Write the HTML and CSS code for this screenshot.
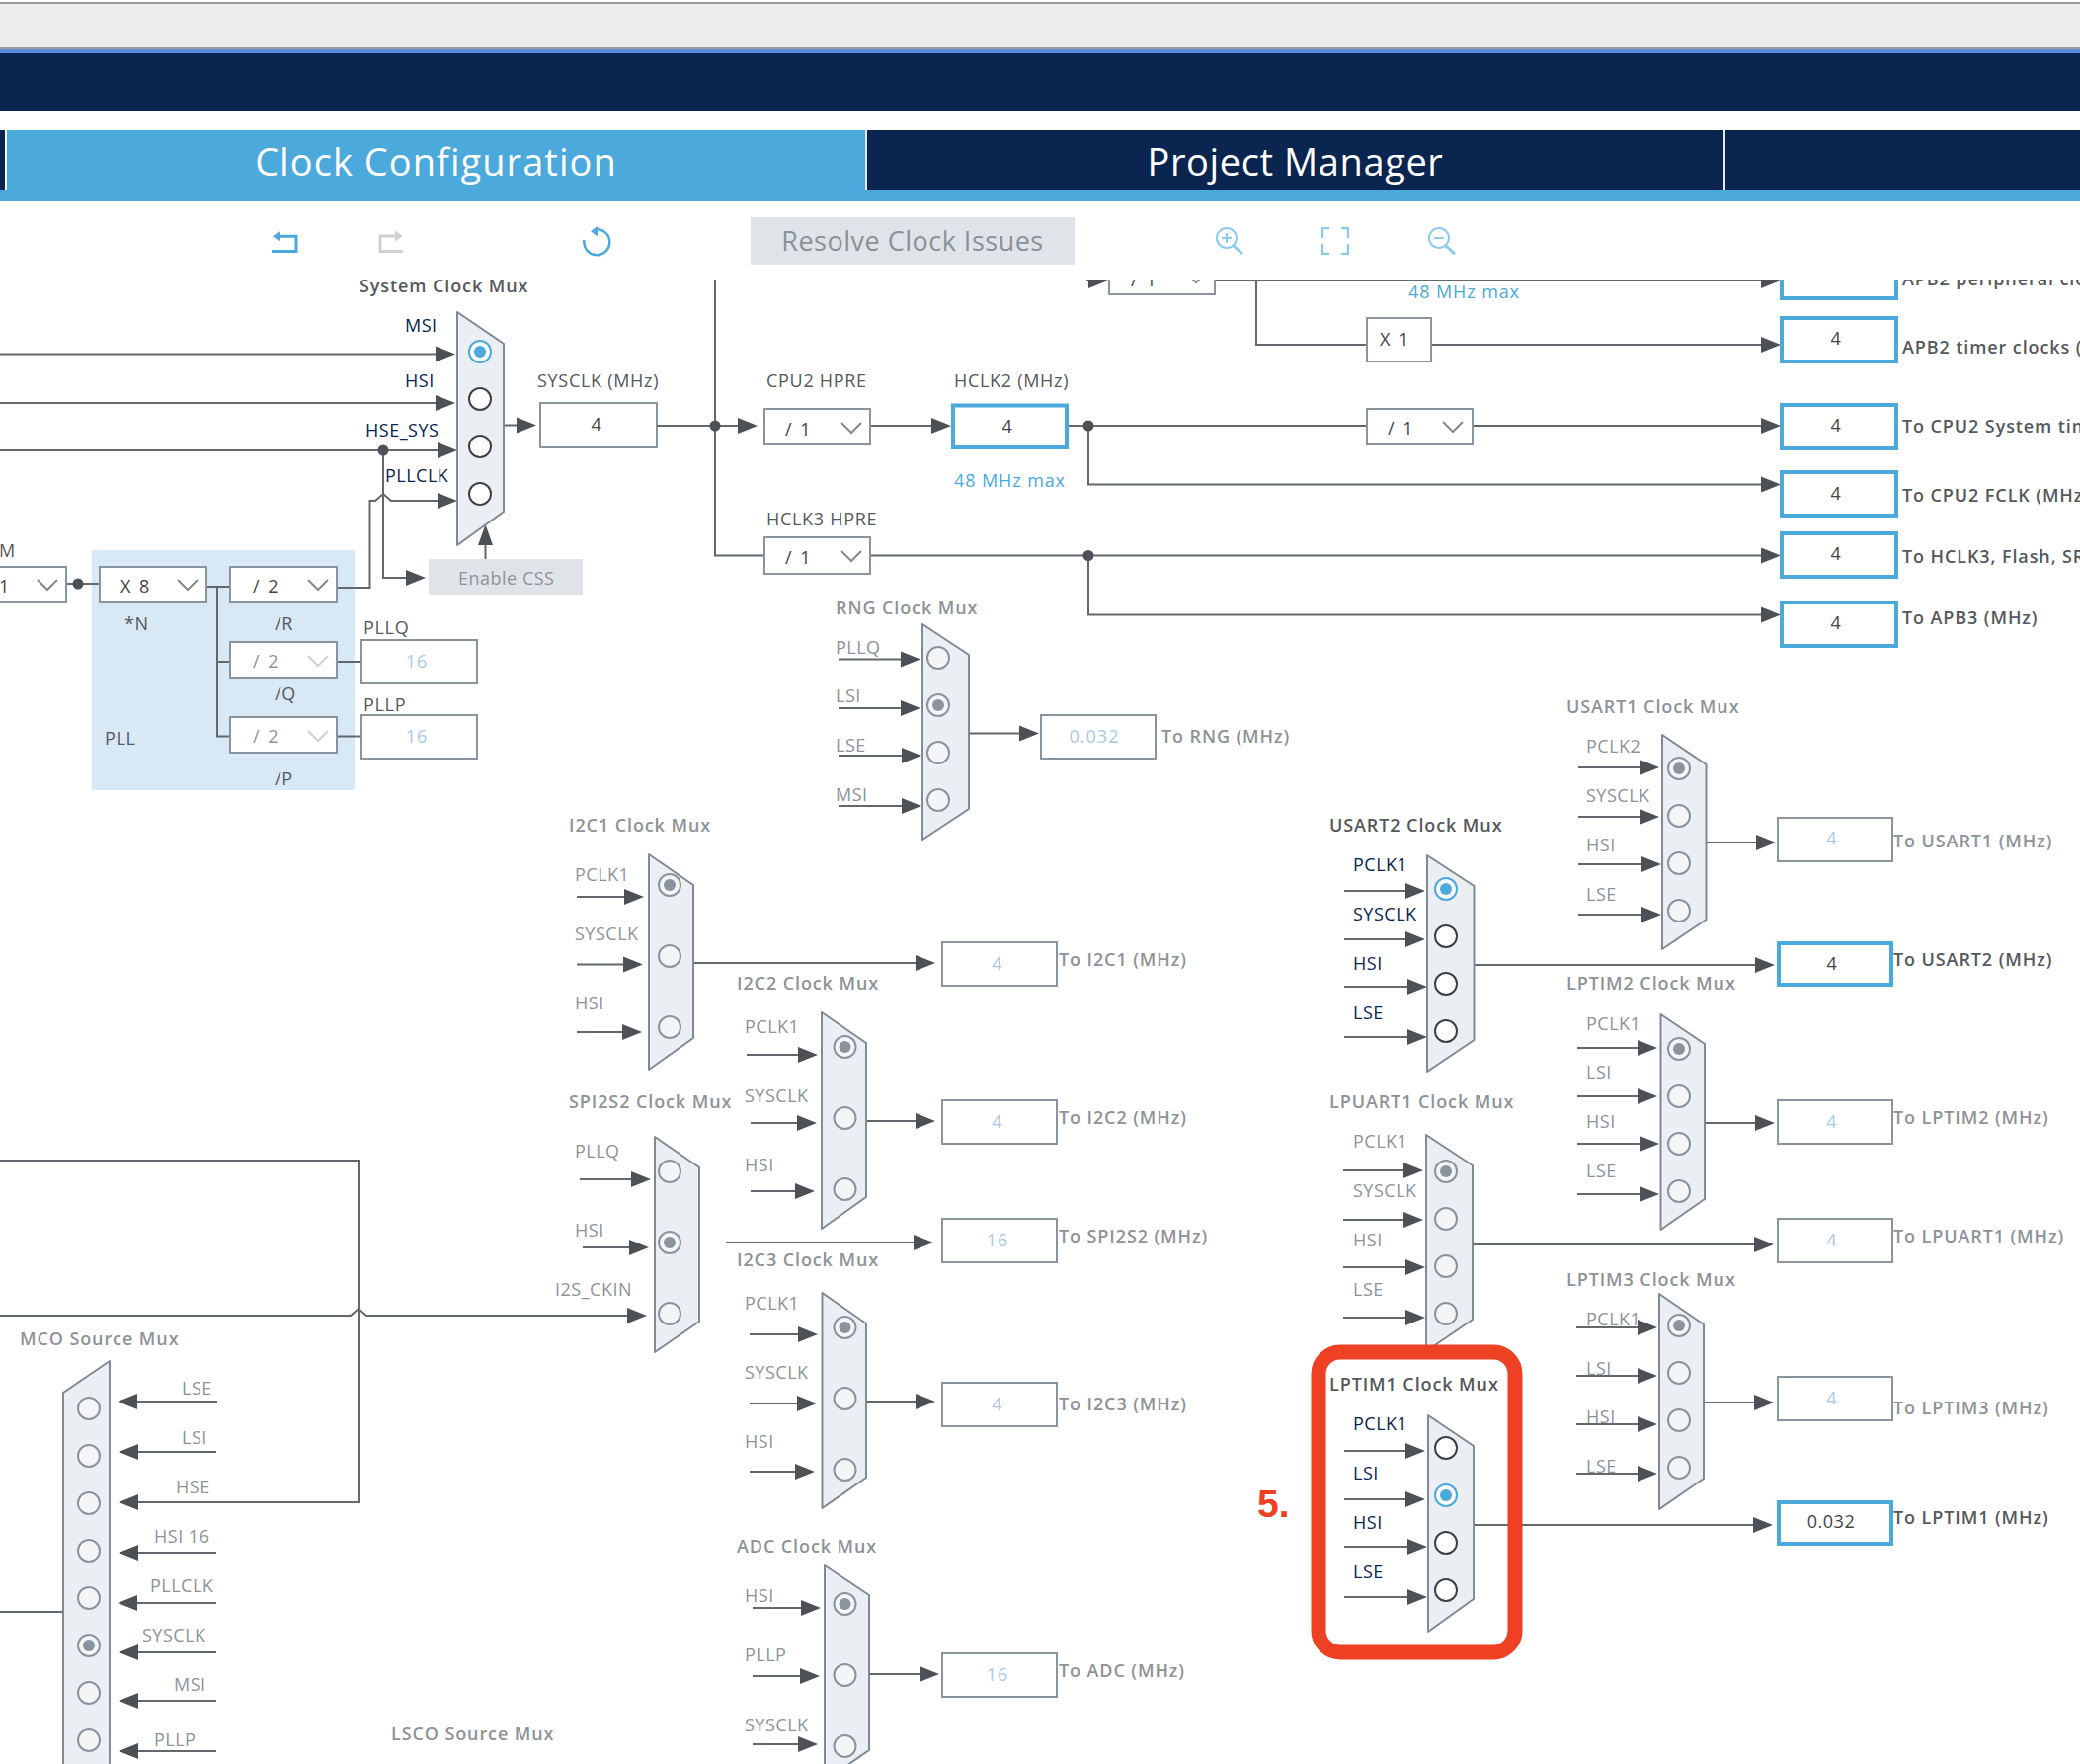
FILE: index.html
```html
<!DOCTYPE html>
<html lang="en">
<head>
  <meta charset="UTF-8" />
  <title>Clock Configuration</title>
  <link rel="stylesheet" href="styles.css">
</head>
<body>
  <div class="chrome"></div>
  <div class="navbar"></div>

  <div class="tabs">
    <div class="tab-stub"></div>
    <div class="tab active">Clock Configuration</div>
    <div class="tab">Project Manager</div>
    <div class="tab-rest"></div>
  </div>

  <div class="toolbar">
    <svg class="tool undo" width="28" height="26" viewBox="0 0 28 26"><path d="M8 8.200H25V23.500H0" fill="none" stroke="#4ba9dc" stroke-width="3"/><path d="M1 8.200 9 2.500v11.500z" fill="#4ba9dc"/></svg>
    <svg class="tool redo" width="28" height="26" viewBox="0 0 28 26"><path d="M18 8H3V23.500H26" fill="none" stroke="#d0d0d0" stroke-width="3"/><path d="M25.700 8 18 2.500v11z" fill="#d0d0d0"/></svg>
    <svg class="tool refresh" width="30" height="32" viewBox="0 0 30 32"><path d="M1.500 15A13 13 0 1 0 14.300 4.200" fill="none" stroke="#4ba9dc" stroke-width="2.500"/><path d="M8 6.200 15 1v10.500z" fill="#4ba9dc"/></svg>
    <button class="resolve">Resolve Clock Issues</button>
    <svg class="tool zoom-in" width="30" height="28" viewBox="0 0 30 28"><circle cx="12" cy="11" r="10" fill="none" stroke="#8ccbec" stroke-width="2"/><path d="M19 19l9 8" stroke="#8ccbec" stroke-width="3"/><path d="M12 6v10M7 11h10" stroke="#8ccbec" stroke-width="2"/></svg>
    <svg class="tool fit" width="28" height="28" viewBox="0 0 28 28"><path d="M8 1H1v10M20 1h7v10M8 27H1V17M20 27h7V17" fill="none" stroke="#8ccbec" stroke-width="2.500"/></svg>
    <svg class="tool zoom-out" width="30" height="28" viewBox="0 0 30 28"><circle cx="12" cy="11" r="10" fill="none" stroke="#8ccbec" stroke-width="2"/><path d="M19 19l9 8" stroke="#8ccbec" stroke-width="3"/><path d="M7 11h10" stroke="#8ccbec" stroke-width="2"/></svg>
  </div>

  <svg class="diagram" width="2106" height="1503" viewBox="0 283 2106 1503">
    <defs>
      <path id="ah" d="M-20-8 0 0-20 8z"/>
      <path id="ahl" d="M20-8 0 0 20 8z"/>
      <path id="chev" d="M-10-5 0 5 10-5"/>
    </defs>

    <!-- PLL -->
    <rect class="pll" x="93" y="557" width="266" height="243"/>
    <path class="wire" d="M68 591H100M210 594H232M220 594V745.500H232M220 670H232M342 670H365M342 745.500H365"/>
    <circle class="dot" cx="79" cy="591" r="5.500"/>
    <rect class="box" x="-10" y="574" width="77" height="36"/>
    <rect class="box" x="101" y="574" width="108" height="36"/>
    <rect class="box" x="233" y="574" width="108" height="36"/>
    <rect class="box" x="233" y="650" width="108" height="36"/>
    <rect class="box" x="233" y="726" width="108" height="36"/>
    <rect class="box" x="366" y="648" width="117" height="44"/>
    <rect class="box" x="366" y="724" width="117" height="44"/>
    <use class="chev" href="#chev" x="48" y="592"/>
    <use class="chev" href="#chev" x="190" y="592"/>
    <use class="chev" href="#chev" x="322" y="592"/>
    <use class="chev-off" href="#chev" x="322" y="669"/>
    <use class="chev-off" href="#chev" x="322" y="745"/>
    <text class="dk" x="-1" y="564">M</text>
    <text class="val" x="-1" y="600">1</text>
    <text class="val" x="122" y="600">X 8</text>
    <text class="val" x="256" y="600">/ 2</text>
    <text class="dis" x="256" y="676">/ 2</text>
    <text class="dis" x="256" y="752">/ 2</text>
    <text class="dk" x="126" y="638">*N</text>
    <text class="dk" x="278" y="638">/R</text>
    <text class="dk" x="278" y="709">/Q</text>
    <text class="dk" x="278" y="795">/P</text>
    <text class="dk" x="106" y="754">PLL</text>
    <text class="dk" x="368" y="642">PLLQ</text>
    <text class="dk" x="368" y="720">PLLP</text>
    <text class="val-off mid" x="422" y="676">16</text>
    <text class="val-off mid" x="422" y="752">16</text>

    <!-- system clock mux -->
    <text class="ttl-on" x="364" y="296">System Clock Mux</text>
    <path class="wire" d="M0 358.500H442M0 408H442M0 456H444M342 595H374.500V507H380L388 500 396 507H444M388 456V585H412M491.500 566V548M510 430.500H525"/>
    <circle class="dot" cx="388" cy="456" r="5.500"/>
    <use class="arrow" href="#ah" x="461" y="358.500"/>
    <use class="arrow" href="#ah" x="461" y="408"/>
    <use class="arrow" href="#ah" x="463" y="456"/>
    <use class="arrow" href="#ah" x="463" y="507"/>
    <use class="arrow" href="#ah" x="431" y="585"/>
    <use class="arrow" href="#ah" x="543" y="430.500"/>
    <path class="arrow" d="M484 552 491.500 531 499 552z"/>
    <polygon class="mux" points="463,316 510,348 510,518 463,552"/>
    <circle class="rd-sel" cx="486" cy="356" r="11"/><circle class="pip-sel" cx="486" cy="356" r="6"/>
    <circle class="rd-on" cx="486" cy="404" r="11"/>
    <circle class="rd-on" cx="486" cy="452" r="11"/>
    <circle class="rd-on" cx="486" cy="500" r="11"/>
    <text class="on" x="410" y="336">MSI</text>
    <text class="on" x="410" y="392">HSI</text>
    <text class="on" x="370" y="442">HSE_SYS</text>
    <text class="on" x="390" y="488">PLLCLK</text>
    <rect class="grey-btn" x="434" y="566" width="156" height="36"/>
    <text class="lbl" x="464" y="592">Enable CSS</text>

    <!-- sysclk and bus dividers -->
    <text class="dk" x="544" y="392">SYSCLK (MHz)</text>
    <rect class="box" x="547" y="408" width="118" height="45"/>
    <text class="val mid" x="604" y="436">4</text>
    <path class="wire" d="M665 431H748M724 283V562.500H774M882 431H945M1082 431H1785M1102 431V490.500H1785M882 562.500H1785M1102 562.500V622.500H1785M1100 284H1104M1231 284H1785M1272 284V349H1384M1450 349H1785"/>
    <circle class="dot" cx="724" cy="431" r="5.500"/>
    <circle class="dot" cx="1102" cy="431" r="5.500"/>
    <circle class="dot" cx="1102" cy="562.500" r="5.500"/>
    <use class="arrow" href="#ah" x="767" y="431"/>
    <use class="arrow" href="#ah" x="963" y="431"/>
    <use class="arrow" href="#ah" x="1122" y="284"/>
    <text class="dk" x="776" y="392">CPU2 HPRE</text>
    <rect class="box" x="774" y="414" width="107" height="36"/>
    <text class="val" x="795" y="441">/ 1</text>
    <use class="chev" href="#chev" x="862" y="433"/>
    <text class="dk" x="966" y="392">HCLK2 (MHz)</text>
    <rect class="box-on" x="965" y="410.500" width="115" height="42.500"/>
    <text class="val mid" x="1020" y="438">4</text>
    <text class="max" x="966" y="492.500">48 MHz max</text>
    <text class="dk" x="776" y="532">HCLK3 HPRE</text>
    <rect class="box" x="774" y="544" width="107" height="37"/>
    <text class="val" x="795" y="571">/ 1</text>
    <use class="chev" href="#chev" x="862" y="563"/>
    <rect class="box" x="1123" y="260" width="107" height="38"/>
    <text class="val" x="1145" y="290">/ 1</text>
    <use class="chev" href="#chev" x="1211" y="281"/>
    <text class="max" x="1426" y="302">48 MHz max</text>
    <rect class="box" x="1384" y="322" width="65" height="44"/>
    <text class="val mid" x="1412" y="350">X 1</text>
    <rect class="box" x="1384" y="414" width="107" height="36"/>
    <text class="val" x="1405" y="440">/ 1</text>
    <use class="chev" href="#chev" x="1471" y="432"/>

    <!-- clock outputs -->
    <use class="arrow" href="#ah" x="1803" y="284"/>
    <use class="arrow" href="#ah" x="1803" y="349"/>
    <use class="arrow" href="#ah" x="1803" y="431"/>
    <use class="arrow" href="#ah" x="1803" y="490.500"/>
    <use class="arrow" href="#ah" x="1803" y="562.500"/>
    <use class="arrow" href="#ah" x="1803" y="622.500"/>
    <rect class="box-on" x="1804" y="258" width="116" height="44"/>
    <rect class="box-on" x="1804" y="322" width="116" height="44"/>
    <rect class="box-on" x="1804" y="410" width="116" height="44"/>
    <rect class="box-on" x="1804" y="478" width="116" height="44"/>
    <rect class="box-on" x="1804" y="540" width="116" height="44"/>
    <rect class="box-on" x="1804" y="610" width="116" height="44"/>
    <text class="val mid" x="1859" y="349">4</text>
    <text class="val mid" x="1859" y="437">4</text>
    <text class="val mid" x="1859" y="506">4</text>
    <text class="val mid" x="1859" y="567">4</text>
    <text class="val mid" x="1859" y="637">4</text>
    <text class="ttl-on" x="1926" y="289">APB2 peripheral clocks (MHz)</text>
    <text class="ttl-on" x="1926" y="358">APB2 timer clocks (MHz)</text>
    <text class="ttl-on" x="1926" y="438">To CPU2 System timer (MHz)</text>
    <text class="ttl-on" x="1926" y="508">To CPU2 FCLK (MHz)</text>
    <text class="ttl-on" x="1926" y="570">To HCLK3, Flash, SRAM (MHz)</text>
    <text class="ttl-on" x="1926" y="632">To APB3 (MHz)</text>

    <!-- RNG -->
    <text class="ttl" x="846" y="622">RNG Clock Mux</text>
    <path class="wire" d="M849 667.500H915M849 717H915M849 765H915M849 816H915M981 742.500H1035"/>
    <use class="arrow" href="#ah" x="932" y="667.500"/>
    <use class="arrow" href="#ah" x="932" y="717"/>
    <use class="arrow" href="#ah" x="933" y="765"/>
    <use class="arrow" href="#ah" x="933" y="816"/>
    <use class="arrow" href="#ah" x="1052" y="742.500"/>
    <polygon class="mux" points="934,632 981,663 981,819 934,850"/>
    <circle class="rd" cx="950" cy="666" r="11"/>
    <circle class="rd" cx="950" cy="714" r="11"/><circle class="pip" cx="950" cy="714" r="6"/>
    <circle class="rd" cx="950" cy="762" r="11"/>
    <circle class="rd" cx="950" cy="810" r="11"/>
    <text class="lbl" x="846" y="662">PLLQ</text>
    <text class="lbl" x="846" y="711">LSI</text>
    <text class="lbl" x="846" y="761">LSE</text>
    <text class="lbl" x="846" y="811">MSI</text>
    <rect class="box" x="1054" y="724" width="116" height="44"/>
    <text class="val-off mid" x="1108" y="752">0.032</text>
    <text class="ttl" x="1176" y="752">To RNG (MHz)</text>

    <!-- I2C1 -->
    <text class="ttl" x="576" y="842">I2C1 Clock Mux</text>
    <path class="wire" d="M584 908H636M584 976.500H636M584 1045H636M702 975H930"/>
    <use class="arrow" href="#ah" x="652" y="908"/>
    <use class="arrow" href="#ah" x="651" y="976.500"/>
    <use class="arrow" href="#ah" x="650" y="1045"/>
    <use class="arrow" href="#ah" x="947" y="975"/>
    <polygon class="mux" points="657,865 702,896 702,1051 657,1083"/>
    <circle class="rd" cx="678" cy="896" r="11"/><circle class="pip" cx="678" cy="896" r="6"/>
    <circle class="rd" cx="678" cy="968" r="11"/>
    <circle class="rd" cx="678" cy="1040" r="11"/>
    <text class="lbl" x="582" y="892">PCLK1</text>
    <text class="lbl" x="582" y="952">SYSCLK</text>
    <text class="lbl" x="582" y="1022">HSI</text>
    <rect class="box" x="954" y="954" width="116" height="44"/>
    <text class="val-off mid" x="1010" y="982">4</text>
    <text class="ttl" x="1072" y="978">To I2C1 (MHz)</text>

    <!-- I2C2 -->
    <text class="ttl" x="746" y="1002">I2C2 Clock Mux</text>
    <path class="wire" d="M756 1068H812M760 1137H812M760 1206H810M877 1135H930"/>
    <use class="arrow" href="#ah" x="828" y="1068"/>
    <use class="arrow" href="#ah" x="827" y="1137"/>
    <use class="arrow" href="#ah" x="825" y="1206"/>
    <use class="arrow" href="#ah" x="947" y="1135"/>
    <polygon class="mux" points="832,1025 877,1056 877,1212 832,1244"/>
    <circle class="rd" cx="855.500" cy="1060" r="11"/><circle class="pip" cx="855.500" cy="1060" r="6"/>
    <circle class="rd" cx="855.500" cy="1132" r="11"/>
    <circle class="rd" cx="855.500" cy="1204" r="11"/>
    <text class="lbl" x="754" y="1046">PCLK1</text>
    <text class="lbl" x="754" y="1116">SYSCLK</text>
    <text class="lbl" x="754" y="1186">HSI</text>
    <rect class="box" x="954" y="1114" width="116" height="44"/>
    <text class="val-off mid" x="1010" y="1142">4</text>
    <text class="ttl" x="1072" y="1138">To I2C2 (MHz)</text>

    <!-- SPI2S2 -->
    <text class="ttl" x="576" y="1122">SPI2S2 Clock Mux</text>
    <path class="wire" d="M587 1194H640M590 1263H640M0 1332H355L363 1325 371 1332H640M735 1258H930M0 1175H363V1521H130"/>
    <use class="arrow" href="#ah" x="659" y="1194"/>
    <use class="arrow" href="#ah" x="657" y="1263"/>
    <use class="arrow" href="#ah" x="655" y="1332"/>
    <use class="arrow" href="#ah" x="945" y="1258"/>
    <polygon class="mux" points="663,1151 708,1182 708,1338 663,1369"/>
    <circle class="rd" cx="678" cy="1186" r="11"/>
    <circle class="rd" cx="678" cy="1258" r="11"/><circle class="pip" cx="678" cy="1258" r="6"/>
    <circle class="rd" cx="678" cy="1330" r="11"/>
    <text class="lbl" x="582" y="1172">PLLQ</text>
    <text class="lbl" x="582" y="1252">HSI</text>
    <text class="lbl" x="562" y="1312">I2S_CKIN</text>
    <rect class="box" x="954" y="1234" width="116" height="44"/>
    <text class="val-off mid" x="1010" y="1262">16</text>
    <text class="ttl" x="1072" y="1258">To SPI2S2 (MHz)</text>

    <!-- I2C3 -->
    <text class="ttl" x="746" y="1282">I2C3 Clock Mux</text>
    <path class="wire" d="M759 1351H812M759 1421H812M759 1490H810M877 1419H930"/>
    <use class="arrow" href="#ah" x="828" y="1351"/>
    <use class="arrow" href="#ah" x="827" y="1421"/>
    <use class="arrow" href="#ah" x="825" y="1490"/>
    <use class="arrow" href="#ah" x="947" y="1419"/>
    <polygon class="mux" points="832.500,1309 877,1340 877,1496 832.500,1527"/>
    <circle class="rd" cx="855.500" cy="1344" r="11"/><circle class="pip" cx="855.500" cy="1344" r="6"/>
    <circle class="rd" cx="855.500" cy="1416" r="11"/>
    <circle class="rd" cx="855.500" cy="1488" r="11"/>
    <text class="lbl" x="754" y="1326">PCLK1</text>
    <text class="lbl" x="754" y="1396">SYSCLK</text>
    <text class="lbl" x="754" y="1466">HSI</text>
    <rect class="box" x="954" y="1400" width="116" height="44"/>
    <text class="val-off mid" x="1010" y="1428">4</text>
    <text class="ttl" x="1072" y="1428">To I2C3 (MHz)</text>

    <!-- ADC -->
    <text class="ttl" x="746" y="1572">ADC Clock Mux</text>
    <path class="wire" d="M762 1628H815M762 1697H815M762 1766H812M880 1695H935"/>
    <use class="arrow" href="#ah" x="831" y="1628"/>
    <use class="arrow" href="#ah" x="830" y="1697"/>
    <use class="arrow" href="#ah" x="828" y="1766"/>
    <use class="arrow" href="#ah" x="951" y="1695"/>
    <polygon class="mux" points="835,1585 880,1615 880,1772 835,1803"/>
    <circle class="rd" cx="855.500" cy="1624" r="11"/><circle class="pip" cx="855.500" cy="1624" r="6"/>
    <circle class="rd" cx="855.500" cy="1696" r="11"/>
    <circle class="rd" cx="855.500" cy="1768" r="11"/>
    <text class="lbl" x="754" y="1622">HSI</text>
    <text class="lbl" x="754" y="1682">PLLP</text>
    <text class="lbl" x="754" y="1753">SYSCLK</text>
    <rect class="box" x="954" y="1674" width="116" height="44"/>
    <text class="val-off mid" x="1010" y="1702">16</text>
    <text class="ttl" x="1072" y="1698">To ADC (MHz)</text>

    <!-- USART1 -->
    <text class="ttl" x="1586" y="722">USART1 Clock Mux</text>
    <path class="wire" d="M1598 777H1664M1598 827H1664M1598 875H1664M1598 926H1664M1727 853H1780"/>
    <use class="arrow" href="#ah" x="1680" y="777"/>
    <use class="arrow" href="#ah" x="1680" y="827"/>
    <use class="arrow" href="#ah" x="1682" y="875"/>
    <use class="arrow" href="#ah" x="1682" y="926"/>
    <use class="arrow" href="#ah" x="1798" y="853"/>
    <polygon class="mux" points="1683,744 1727.500,774 1727.500,931 1683,961"/>
    <circle class="rd" cx="1700" cy="778" r="11"/><circle class="pip" cx="1700" cy="778" r="6"/>
    <circle class="rd" cx="1700" cy="826" r="11"/>
    <circle class="rd" cx="1700" cy="874" r="11"/>
    <circle class="rd" cx="1700" cy="922" r="11"/>
    <text class="lbl" x="1606" y="762">PCLK2</text>
    <text class="lbl" x="1606" y="812">SYSCLK</text>
    <text class="lbl" x="1606" y="862">HSI</text>
    <text class="lbl" x="1606" y="912">LSE</text>
    <rect class="box" x="1800" y="828" width="116" height="44"/>
    <text class="val-off mid" x="1855" y="855">4</text>
    <text class="ttl" x="1917" y="858">To USART1 (MHz)</text>

    <!-- USART2 -->
    <text class="ttl-on" x="1346" y="842">USART2 Clock Mux</text>
    <path class="wire" d="M1361 902H1427M1361 951H1427M1361 999H1429M1361 1050H1429M1492 977H1780"/>
    <use class="arrow" href="#ah" x="1443" y="902"/>
    <use class="arrow" href="#ah" x="1443" y="951"/>
    <use class="arrow" href="#ah" x="1445" y="999"/>
    <use class="arrow" href="#ah" x="1445" y="1050"/>
    <use class="arrow" href="#ah" x="1797" y="977"/>
    <polygon class="mux" points="1445,866 1492.500,897 1492.500,1053 1445,1085"/>
    <circle class="rd-sel" cx="1464" cy="900" r="11"/><circle class="pip-sel" cx="1464" cy="900" r="6"/>
    <circle class="rd-on" cx="1464" cy="948" r="11"/>
    <circle class="rd-on" cx="1464" cy="996" r="11"/>
    <circle class="rd-on" cx="1464" cy="1044" r="11"/>
    <text class="on" x="1370" y="882">PCLK1</text>
    <text class="on" x="1370" y="932">SYSCLK</text>
    <text class="on" x="1370" y="982">HSI</text>
    <text class="on" x="1370" y="1032">LSE</text>
    <rect class="box-on" x="1801" y="955" width="114" height="42"/>
    <text class="val mid" x="1855" y="982">4</text>
    <text class="ttl-on" x="1917" y="978">To USART2 (MHz)</text>

    <!-- LPTIM2 -->
    <text class="ttl" x="1586" y="1002">LPTIM2 Clock Mux</text>
    <path class="wire" d="M1597 1061H1662M1597 1110H1662M1597 1158H1664M1597 1209H1664M1726 1137H1780"/>
    <use class="arrow" href="#ah" x="1678" y="1061"/>
    <use class="arrow" href="#ah" x="1678" y="1110"/>
    <use class="arrow" href="#ah" x="1680" y="1158"/>
    <use class="arrow" href="#ah" x="1680" y="1209"/>
    <use class="arrow" href="#ah" x="1797" y="1137"/>
    <polygon class="mux" points="1681.500,1027 1726,1057 1726,1214 1681.500,1245"/>
    <circle class="rd" cx="1700" cy="1062" r="11"/><circle class="pip" cx="1700" cy="1062" r="6"/>
    <circle class="rd" cx="1700" cy="1110" r="11"/>
    <circle class="rd" cx="1700" cy="1158" r="11"/>
    <circle class="rd" cx="1700" cy="1206" r="11"/>
    <text class="lbl" x="1606" y="1043">PCLK1</text>
    <text class="lbl" x="1606" y="1092">LSI</text>
    <text class="lbl" x="1606" y="1142">HSI</text>
    <text class="lbl" x="1606" y="1192">LSE</text>
    <rect class="box" x="1800" y="1114" width="116" height="44"/>
    <text class="val-off mid" x="1855" y="1142">4</text>
    <text class="ttl" x="1917" y="1138">To LPTIM2 (MHz)</text>

    <!-- LPUART1 -->
    <text class="ttl" x="1346" y="1122">LPUART1 Clock Mux</text>
    <path class="wire" d="M1360 1185H1425M1360 1235H1425M1360 1283H1427M1360 1334H1427M1491 1260H1780"/>
    <use class="arrow" href="#ah" x="1441" y="1185"/>
    <use class="arrow" href="#ah" x="1441" y="1235"/>
    <use class="arrow" href="#ah" x="1443" y="1283"/>
    <use class="arrow" href="#ah" x="1443" y="1334"/>
    <use class="arrow" href="#ah" x="1796" y="1260"/>
    <polygon class="mux" points="1444,1149 1491,1180 1491,1336 1444,1368"/>
    <circle class="rd" cx="1464" cy="1186" r="11"/><circle class="pip" cx="1464" cy="1186" r="6"/>
    <circle class="rd" cx="1464" cy="1234" r="11"/>
    <circle class="rd" cx="1464" cy="1282" r="11"/>
    <circle class="rd" cx="1464" cy="1330" r="11"/>
    <text class="lbl" x="1370" y="1162">PCLK1</text>
    <text class="lbl" x="1370" y="1212">SYSCLK</text>
    <text class="lbl" x="1370" y="1262">HSI</text>
    <text class="lbl" x="1370" y="1312">LSE</text>
    <rect class="box" x="1800" y="1234" width="116" height="44"/>
    <text class="val-off mid" x="1855" y="1262">4</text>
    <text class="ttl" x="1917" y="1258">To LPUART1 (MHz)</text>

    <!-- LPTIM3 -->
    <text class="ttl" x="1586" y="1302">LPTIM3 Clock Mux</text>
    <path class="wire" d="M1596 1344H1660M1596 1393H1660M1596 1442H1660M1596 1492H1660M1725 1420H1780"/>
    <use class="arrow" href="#ah" x="1678" y="1344"/>
    <use class="arrow" href="#ah" x="1678" y="1393"/>
    <use class="arrow" href="#ah" x="1678" y="1442"/>
    <use class="arrow" href="#ah" x="1678" y="1492"/>
    <use class="arrow" href="#ah" x="1796" y="1420"/>
    <polygon class="mux" points="1680,1310 1725,1341 1725,1497 1680,1528"/>
    <circle class="rd" cx="1700" cy="1342" r="11"/><circle class="pip" cx="1700" cy="1342" r="6"/>
    <circle class="rd" cx="1700" cy="1390" r="11"/>
    <circle class="rd" cx="1700" cy="1438" r="11"/>
    <circle class="rd" cx="1700" cy="1486" r="11"/>
    <text class="lbl" x="1606" y="1342">PCLK1</text>
    <text class="lbl" x="1606" y="1392">LSI</text>
    <text class="lbl" x="1606" y="1441">HSI</text>
    <text class="lbl" x="1606" y="1491">LSE</text>
    <rect class="box" x="1800" y="1394" width="116" height="44"/>
    <text class="val-off mid" x="1855" y="1422">4</text>
    <text class="ttl" x="1917" y="1432">To LPTIM3 (MHz)</text>

    <!-- LPTIM1 with the red callout -->
    <path class="wire" d="M1541 1544H1776"/>
    <use class="arrow" href="#ah" x="1795" y="1544"/>
    <rect class="callout" x="1335" y="1369" width="199" height="304" rx="22"/>
    <text class="step" x="1273" y="1536">5.</text>
    <text class="ttl-on" x="1346" y="1408">LPTIM1 Clock Mux</text>
    <path class="wire" d="M1361 1469H1425M1361 1518H1425M1361 1566H1427M1361 1617H1427M1492 1544H1527"/>
    <use class="arrow" href="#ah" x="1443" y="1469"/>
    <use class="arrow" href="#ah" x="1443" y="1518"/>
    <use class="arrow" href="#ah" x="1445" y="1566"/>
    <use class="arrow" href="#ah" x="1445" y="1617"/>
    <polygon class="mux" points="1446,1433 1492,1464 1492,1619 1446,1652"/>
    <circle class="rd-on" cx="1464" cy="1466" r="11"/>
    <circle class="rd-sel" cx="1464" cy="1514" r="11"/><circle class="pip-sel" cx="1464" cy="1514" r="6"/>
    <circle class="rd-on" cx="1464" cy="1562" r="11"/>
    <circle class="rd-on" cx="1464" cy="1610" r="11"/>
    <text class="on" x="1370" y="1448">PCLK1</text>
    <text class="on" x="1370" y="1498">LSI</text>
    <text class="on" x="1370" y="1548">HSI</text>
    <text class="on" x="1370" y="1598">LSE</text>
    <rect class="box-on" x="1801" y="1521" width="114" height="42"/>
    <text class="val mid" x="1854" y="1547">0.032</text>
    <text class="ttl-on" x="1917" y="1543">To LPTIM1 (MHz)</text>

    <!-- MCO -->
    <text class="ttl" x="20" y="1362">MCO Source Mux</text>
    <path class="wire" d="M130 1419H220M130 1470H219M130 1521H219M130 1572H219M130 1623H219M130 1673H219M130 1722H219M130 1773H219M0 1632H64"/>
    <use class="arrow" href="#ahl" x="119" y="1419"/>
    <use class="arrow" href="#ahl" x="120" y="1470"/>
    <use class="arrow" href="#ahl" x="120" y="1521"/>
    <use class="arrow" href="#ahl" x="120" y="1572"/>
    <use class="arrow" href="#ahl" x="119" y="1623"/>
    <use class="arrow" href="#ahl" x="120" y="1673"/>
    <use class="arrow" href="#ahl" x="120" y="1722"/>
    <use class="arrow" href="#ahl" x="120" y="1773"/>
    <polygon class="mux" points="111,1378 111,1800 64,1800 64,1410"/>
    <circle class="rd" cx="90" cy="1426" r="11"/>
    <circle class="rd" cx="90" cy="1474" r="11"/>
    <circle class="rd" cx="90" cy="1522" r="11"/>
    <circle class="rd" cx="90" cy="1570" r="11"/>
    <circle class="rd" cx="90" cy="1618" r="11"/>
    <circle class="rd" cx="90" cy="1666" r="11"/><circle class="pip" cx="90" cy="1666" r="6"/>
    <circle class="rd" cx="90" cy="1714" r="11"/>
    <circle class="rd" cx="90" cy="1762" r="11"/>
    <text class="lbl" x="184" y="1412">LSE</text>
    <text class="lbl" x="184" y="1462">LSI</text>
    <text class="lbl" x="178" y="1512">HSE</text>
    <text class="lbl" x="156" y="1562">HSI 16</text>
    <text class="lbl" x="152" y="1612">PLLCLK</text>
    <text class="lbl" x="144" y="1662">SYSCLK</text>
    <text class="lbl" x="176" y="1712">MSI</text>
    <text class="lbl" x="156" y="1768">PLLP</text>
    <text class="ttl" x="396" y="1762">LSCO Source Mux</text>
  </svg>
</body>
</html>
```

FILE: styles.css
```css
html, body {
  margin: 0;
  height: 1786px;
  overflow: hidden;
  background: #fff;
  font-family: "Open Sans", sans-serif;
}

.chrome {
  height: 44px;
  margin-top: 2px;
  background: #ececec;
  border-top: 2px solid #9b9b9b;
  border-bottom: 2px solid #9b9b9b;
}

.navbar {
  height: 58px;
  background: #0a2550;
  border-top: 4px solid #5b8bdc;
}

.tabs {
  display: flex;
  height: 60px;
  margin-top: 20px;
  background: #0a2550;
  border-bottom: 12px solid #4ba9dc;
}

.tab-stub {
  width: 5px;
  border-right: 2px solid #fff;
}

.tab {
  width: 869px;
  box-sizing: border-box;
  padding-top: 1px;
  border-right: 2px solid #e6e9ee;
  color: #fff;
  font-size: 38px;
  letter-spacing: .6px;
  line-height: 60px;
  text-align: center;
}

.tab.active {
  width: 871px;
  background: #4ba9dc;
  letter-spacing: 1.050px;
}

.tab-rest {
  flex: 1;
}

.toolbar {
  display: flex;
  align-items: center;
  height: 79px;
}

.tool {
  flex: none;
}

.undo { margin-left: 275px; }
.redo { margin-left: 79px; }
.refresh { margin-left: 180px; }
.zoom-in { margin-left: 142px; }
.fit { margin-left: 78px; }
.zoom-out { margin-left: 79px; }

.resolve {
  width: 328px;
  height: 48px;
  margin-left: 140px;
  padding: 0;
  border: none;
  background: #e0e4e8;
  color: #8a9199;
  font-family: "Open Sans", sans-serif;
  font-size: 27px;
  letter-spacing: .5px;
}

.diagram {
  display: block;
}

.diagram text {
  font-size: 18px;
  letter-spacing: .5px;
}

.wire {
  fill: none;
  stroke: #63686d;
  stroke-width: 2;
}

.arrow { fill: #4d5156; }
.dot { fill: #4d5156; }

.chev, .chev-off {
  fill: none;
  stroke-width: 2;
}

.chev { stroke: #85898d; }
.chev-off { stroke: #cfd2d5; }

.pll { fill: #d9e8f5; }

.mux {
  fill: #ebeff3;
  stroke: #7f8a96;
  stroke-width: 2;
  stroke-linejoin: round;
}

.rd, .rd-on, .rd-sel {
  stroke-width: 2;
}

.rd { fill: #f3f5f7; stroke: #8a949e; }
.rd-on { fill: #fff; stroke: #3d4246; }
.rd-sel { fill: #fff; stroke: #4ba9dc; }
.pip { fill: #8a949e; }
.pip-sel { fill: #4ba9dc; }

.box, .box-on {
  fill: #fff;
}

.box { stroke: #8a949e; stroke-width: 2; }
.box-on { stroke: #4ba9dc; stroke-width: 4; }

.grey-btn { fill: #e0e4e8; }

.callout {
  fill: #fff;
  stroke: #ee4023;
  stroke-width: 15;
}

.diagram .lbl { fill: #8e9398; }
.diagram .on { fill: #0a2550; }
.diagram .dk { fill: #55595c; letter-spacing: .7px; }
.diagram .val { fill: #444; word-spacing: 3px; }
.diagram .dis { fill: #8e9398; word-spacing: 3px; }
.diagram .val-off { fill: #a9c8e8; letter-spacing: 1px; }
.diagram .max { fill: #4ba9dc; letter-spacing: .9px; }
.diagram .ttl { fill: #8e9398; font-weight: 600; letter-spacing: .9px; }
.diagram .ttl-on { fill: #55595c; font-weight: 600; letter-spacing: .9px; }
.diagram .mid { text-anchor: middle; }

.diagram .step {
  fill: #ee4023;
  font-family: "Liberation Sans", sans-serif;
  font-size: 39px;
  font-weight: 700;
  letter-spacing: 0;
}
```
